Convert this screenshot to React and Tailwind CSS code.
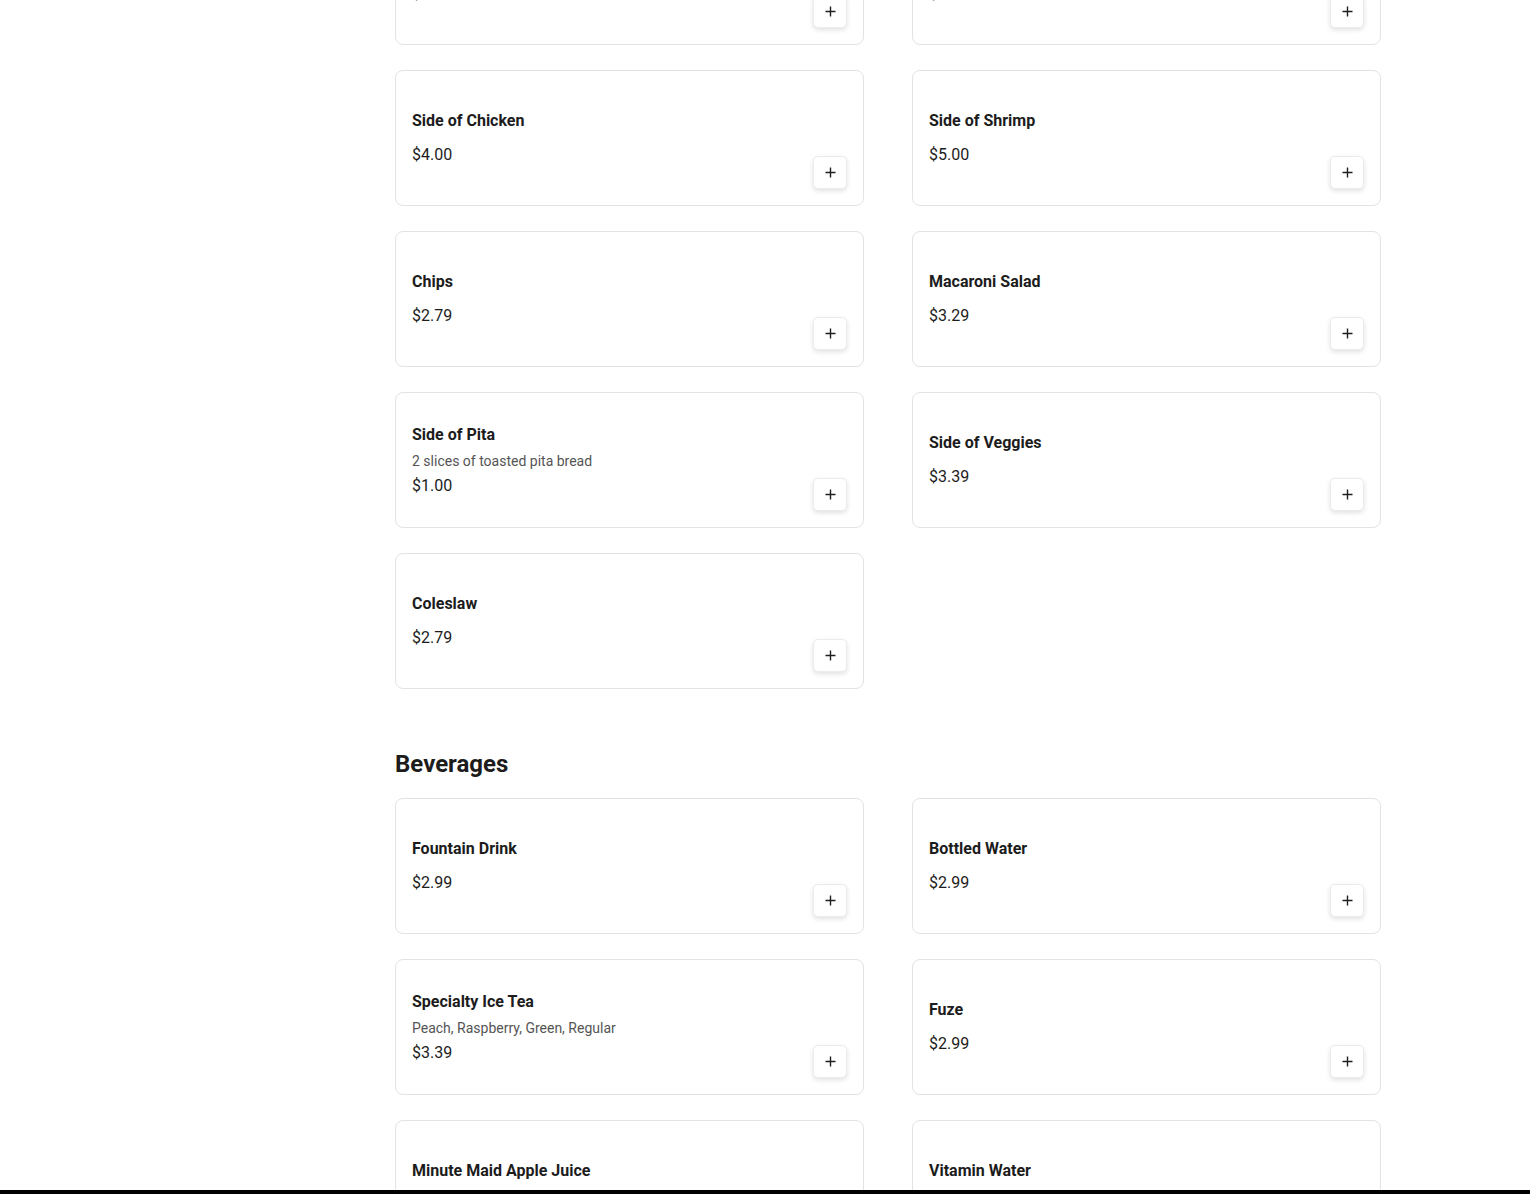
const SIDES = [
  { name: 'Side of Rice', price: '$2.79' },
  { name: 'Side of Falafel', price: '$3.29' },
  { name: 'Side of Chicken', price: '$4.00' },
  { name: 'Side of Shrimp', price: '$5.00' },
  { name: 'Chips', price: '$2.79' },
  { name: 'Macaroni Salad', price: '$3.29' },
  { name: 'Side of Pita', desc: '2 slices of toasted pita bread', price: '$1.00' },
  { name: 'Side of Veggies', price: '$3.39' },
  { name: 'Coleslaw', price: '$2.79' },
];

const BEVERAGES = [
  { name: 'Fountain Drink', price: '$2.99' },
  { name: 'Bottled Water', price: '$2.99' },
  { name: 'Specialty Ice Tea', desc: 'Peach, Raspberry, Green, Regular', price: '$3.39' },
  { name: 'Fuze', price: '$2.99' },
  { name: 'Minute Maid Apple Juice', price: '$2.99' },
  { name: 'Vitamin Water', price: '$2.99' },
];

function PlusIcon() {
  return (
    <svg width="11" height="11" viewBox="0 0 11 11" fill="none">
      <path d="M5.5 0.5v10M0.5 5.5h10" stroke="#1f1f1f" strokeWidth="1.4" />
    </svg>
  );
}

function MenuItem({ item }) {
  return (
    <div className="h-[136px] bg-white border border-[#e3e3e3] rounded-[8px] pl-4 pr-[16px] py-4 flex justify-between">
      <div className="self-center flex flex-col">
        <span className="text-[16px] leading-6 font-bold text-[#1c1c1c]">{item.name}</span>
        {item.desc && <span className="mt-1 text-[14px] leading-5 text-[#555555]">{item.desc}</span>}
        <span className={`text-[16px] leading-6 text-[#1c1c1c] ${item.desc ? 'mt-[3px]' : 'mt-[10px]'}`}>{item.price}</span>
      </div>
      <button className="self-end w-[34px] h-[33px] bg-white rounded-[5px] border border-[#ececec] shadow-[0_2px_5px_rgba(0,0,0,0.12)] flex items-center justify-center">
        <PlusIcon />
      </button>
    </div>
  );
}

export default function App() {
  return (
    <div className="min-h-screen bg-white font-['Roboto','Liberation_Sans',sans-serif] overflow-hidden">
      <div className="pl-[395px] pr-[149px] -mt-[91px]">
        <section>
          <div className="grid grid-cols-2 gap-x-12 gap-y-[25px]">
            {SIDES.map(item => <MenuItem key={item.name} item={item} />)}
          </div>
        </section>
        <section className="mt-[59px]">
          <h2 className="text-[24px] leading-8 font-bold text-[#1c1c1c] mb-[18px]">Beverages</h2>
          <div className="grid grid-cols-2 gap-x-12 gap-y-[25px]">
            {BEVERAGES.map(item => <MenuItem key={item.name} item={item} />)}
          </div>
        </section>
      </div>
      <div className="fixed bottom-0 left-0 right-0 h-1 bg-black" />
    </div>
  );
}
